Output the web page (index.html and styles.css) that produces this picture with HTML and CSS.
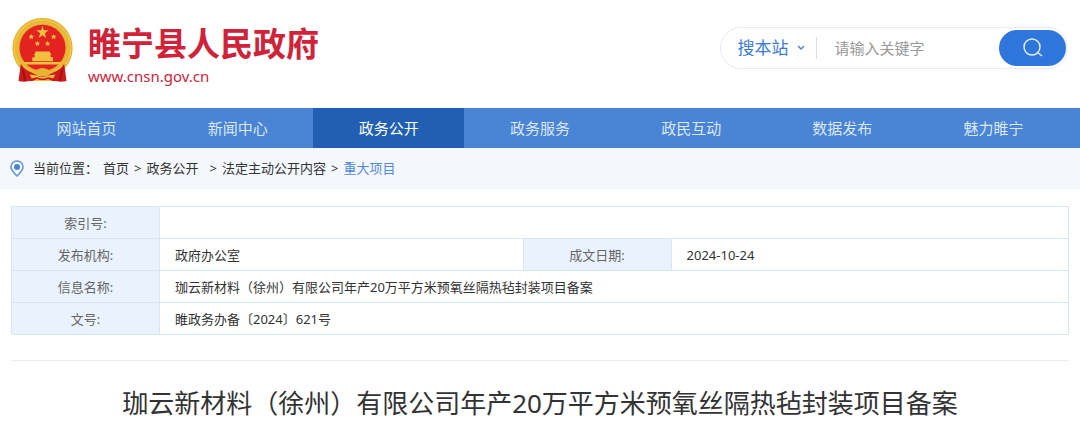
FILE: index.html
```
<!DOCTYPE html>
<html lang="zh-CN">
<head>
    <meta charset="UTF-8">
    <meta name="viewport" content="width=device-width, initial-scale=1">
    <title>睢宁县人民政府</title>
    <link rel="stylesheet" href="styles.css">
</head>
<body>
    <header class="header">
        <a class="logo" href="#">
            <svg class="emblem" viewBox="24 23 180 192" aria-hidden="true">
                <circle cx="114" cy="112" r="89" fill="#e3ac2c"/>
                <circle cx="114" cy="112" r="83" fill="none" stroke="#f0c548" stroke-width="6"/>
                <circle cx="114" cy="112" r="75" fill="none" stroke="#e9b93a" stroke-width="8"/>
                <circle cx="114" cy="111" r="68" fill="#e3231f"/>
                <g fill="#f2c03f">
                    <path d="M114 46L118 59H132L121 68L125 82L114 74L103 82L107 68L96 59H110Z"/>
                    <path d="M81 70L83 75L89 76L85 80L86 86L81 83L76 86L77 80L73 76L79 75Z"/>
                    <path d="M147 70L149 75L155 76L151 80L152 86L147 83L142 86L143 80L139 76L145 75Z"/>
                    <path d="M99 90L101 95L107 96L103 100L104 106L99 103L94 106L95 100L91 96L97 95Z"/>
                    <path d="M129 90L131 95L137 96L133 100L134 106L129 103L124 106L125 100L121 96L127 95Z"/>
                    <path d="M94 122H135L140 132H89ZM91 132H138V139H145V151H84V139H91Z"/>
                    <path d="M58 153H170L165 160H63Z"/>
                </g>
                <path fill="#cf1a1c" d="M50 158Q60 176 82 184L98 192H130L146 184Q168 176 178 158L185 209Q169 213 154 209H74Q59 213 43 209Z"/>
                <path fill="#a80f14" d="M52 172L60 208L67 209L58 174ZM176 172L168 208L161 209L170 174Z"/>
                <path fill="#e8b332" d="M92 184Q96 172 114 171Q132 172 136 184L126 196H102Z"/>
                <path fill="#f0bf3c" d="M76 190L98 193Q114 202 130 193L152 190L146 201L130 198Q114 206 98 198L82 201Z"/>
                <path fill="#f0bf3c" d="M84 209L98 203Q114 210 130 203L144 209Z"/>
            </svg>
            <span class="logo-text">
                <strong>睢宁县人民政府</strong>
                <span>www.cnsn.gov.cn</span>
            </span>
        </a>
        <form class="search">
            <label class="scope">
                <select aria-label="搜索范围">
                    <option>搜本站</option>
                </select>
                <svg viewBox="0 0 8 6" aria-hidden="true"><path d="M1 1L4 4L7 1"/></svg>
            </label>
            <input type="text" placeholder="请输入关键字" aria-label="关键字">
            <button type="submit" aria-label="搜索">
                <svg viewBox="0 0 20 20" aria-hidden="true"><circle cx="9" cy="9" r="8"/><path d="M14 14L19 18"/></svg>
            </button>
        </form>
    </header>

    <nav class="nav">
        <a href="#">网站首页</a>
        <a href="#">新闻中心</a>
        <a href="#" class="active">政务公开</a>
        <a href="#">政务服务</a>
        <a href="#">政民互动</a>
        <a href="#">数据发布</a>
        <a href="#">魅力睢宁</a>
    </nav>

    <div class="crumbs">
        <svg viewBox="0 0 14 17" aria-hidden="true">
            <path d="M7 1C3.500 1 1 3.600 1 6.800C1 10.500 7 16 7 16S13 10.500 13 6.800C13 3.600 10.500 1 7 1Z"/>
            <circle cx="7" cy="7" r="3"/>
        </svg>
        <span class="label">当前位置：</span>
        <a href="#">首页</a>
        <span>&gt;</span>
        <a href="#">政务公开</a>
        <span class="wide">&gt;</span>
        <a href="#">法定主动公开内容</a>
        <span>&gt;</span>
        <a href="#" class="current">重大项目</a>
    </div>

    <main class="main">
        <table class="info">
            <colgroup>
                <col class="col-label">
                <col class="col-value">
                <col class="col-label">
                <col>
            </colgroup>
            <tr>
                <th scope="row">索引号:</th>
                <td colspan="3"></td>
            </tr>
            <tr>
                <th scope="row">发布机构:</th>
                <td>政府办公室</td>
                <th scope="row">成文日期:</th>
                <td>2024-10-24</td>
            </tr>
            <tr>
                <th scope="row">信息名称:</th>
                <td colspan="3">珈云新材料（徐州）有限公司年产20万平方米预氧丝隔热毡封装项目备案</td>
            </tr>
            <tr>
                <th scope="row">文号:</th>
                <td colspan="3">睢政务办备〔2024〕621号</td>
            </tr>
        </table>
        <h1>珈云新材料（徐州）有限公司年产20万平方米预氧丝隔热毡封装项目备案</h1>
    </main>
</body>
</html>
```

FILE: styles.css
```
*{
    margin: 0;
    padding: 0;
    box-sizing: border-box;
}
body{
    background: #fff;
    color: #333;
    font: 13px/20px "Noto Sans", "Noto Sans CJK SC", sans-serif;
}
a{
    color: inherit;
    text-decoration: none;
}
input,select,button{
    font-family: inherit;
    border: 0;
    outline: 0;
    background: none;
}

/* header */
.header{
    display: flex;
    justify-content: space-between;
    align-items: flex-start;
    padding: 18px 12px 20px;
}
.logo{
    display: flex;
    gap: 15px;
    color: #d0233a;
}
.emblem{
    width: 61px;
    height: 65px;
}
.logo-text{
    display: flex;
    flex-direction: column;
    padding-top: 6px;
}
.logo-text strong{
    font-size: 33px;
    line-height: 40px;
}
.logo-text span{
    font-size: 15px;
    line-height: 24px;
}
.search{
    display: flex;
    align-items: center;
    width: 33%;
    min-width: 320px;
    height: 42px;
    margin-top: 9px;
    padding: 2px 1px 2px 17px;
    border: 1px solid #e6ebf5;
    border-radius: 21px;
}
.scope{
    display: flex;
    align-items: center;
    gap: 8px;
    height: 22px;
    padding-right: 11px;
    border-right: 1px solid #dcdfe4;
}
.scope select{
    appearance: none;
    color: #3a7bd9;
    font-size: 17px;
    line-height: 22px;
}
.scope svg{
    width: 8px;
    height: 6px;
    fill: none;
    stroke: #4a86dc;
    stroke-width: 1.5;
}
.search input{
    flex: 1;
    min-width: 0;
    padding-left: 18px;
    font-size: 15px;
    line-height: 22px;
}
.search input::placeholder{
    color: #999;
}
.search button{
    display: flex;
    align-items: center;
    justify-content: center;
    width: 67px;
    height: 36px;
    border-radius: 18px;
    background: #2f76dc;
    cursor: pointer;
}
.search button svg{
    width: 20px;
    height: 20px;
    fill: none;
    stroke: #e3edfb;
    stroke-width: 1.5;
}

/* nav */
.nav{
    display: flex;
    padding: 0 11px;
    background: #4a84d4;
}
.nav a{
    flex: 1;
    color: #dbe7f7;
    font-size: 15px;
    line-height: 40px;
    text-align: center;
}
.nav .active{
    background: #215fb2;
    color: #fff;
}

/* breadcrumb */
.crumbs{
    display: flex;
    align-items: center;
    gap: 5px;
    padding: 10px 10px 11px;
    background: #f4f8fd;
}
.crumbs svg{
    width: 14px;
    height: 17px;
    fill: none;
    stroke: #5a90dc;
    stroke-width: 1.5;
}
.crumbs svg circle{
    fill: #4a84d4;
    stroke: none;
}
.crumbs .label{
    margin-left: 4px;
}
.crumbs .wide{
    margin-left: 6px;
}
.crumbs .current{
    color: #5088dc;
}

/* article */
.main{
    padding: 17px 11px;
}
.info{
    width: 100%;
    table-layout: fixed;
    border-collapse: collapse;
}
.info th,.info td{
    height: 32px;
    border: 1px solid #dbe5ee;
}
.info th{
    background: #eaf3fd;
    color: #666;
    font-weight: normal;
    text-align: center;
}
.info td{
    padding-left: 15px;
}
.col-label{
    width: 14%;
}
.col-value{
    width: 34.4%;
}
.main h1{
    margin-top: 25px;
    padding-top: 22px;
    border-top: 1px solid #eaeef3;
    font-size: 26px;
    line-height: 40px;
    font-weight: normal;
    text-align: center;
}
```
